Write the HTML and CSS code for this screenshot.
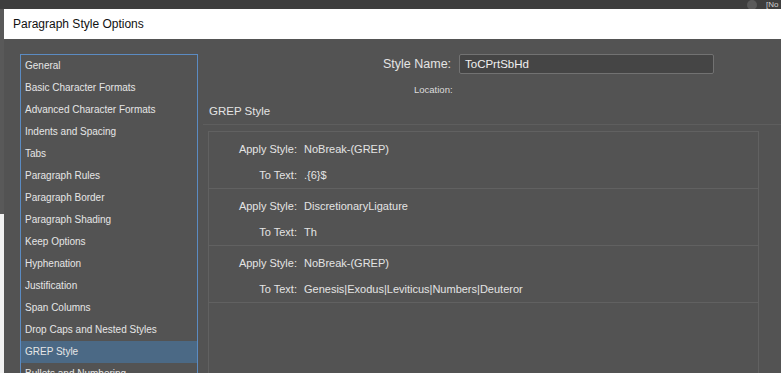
FILE: index.html
```html
<!DOCTYPE html>
<html lang="en">
<head>
    <meta charset="UTF-8">
    <title>Paragraph Style Options</title>
    <link rel="stylesheet" href="styles.css">
</head>
<body>
    <div class="topstrip">
        <span class="app-dot"></span>
        <span class="app-label">[No</span>
    </div>
    <div class="main">
        <div class="doc-edge"></div>
        <div class="dialog">
            <div class="titlebar">Paragraph Style Options</div>
            <div class="dialog-body">
                <ul class="sections">
                    <li>General</li>
                    <li>Basic Character Formats</li>
                    <li>Advanced Character Formats</li>
                    <li>Indents and Spacing</li>
                    <li>Tabs</li>
                    <li>Paragraph Rules</li>
                    <li>Paragraph Border</li>
                    <li>Paragraph Shading</li>
                    <li>Keep Options</li>
                    <li>Hyphenation</li>
                    <li>Justification</li>
                    <li>Span Columns</li>
                    <li>Drop Caps and Nested Styles</li>
                    <li class="selected">GREP Style</li>
                    <li>Bullets and Numbering</li>
                </ul>
                <div class="content">
                    <div class="name-row">
                        <label class="name-label">Style Name:</label>
                        <div class="name-input">ToCPrtSbHd</div>
                    </div>
                    <div class="location-row">
                        <span class="location-label">Location:</span>
                    </div>
                    <h2 class="section-title">GREP Style</h2>
                    <div class="grep-panel">
                        <div class="grep-row">
                            <div class="grep-line"><span class="key">Apply Style:</span><span>NoBreak-(GREP)</span></div>
                            <div class="grep-line"><span class="key">To Text:</span><span>.{6}$</span></div>
                        </div>
                        <div class="grep-row">
                            <div class="grep-line"><span class="key">Apply Style:</span><span>DiscretionaryLigature</span></div>
                            <div class="grep-line"><span class="key">To Text:</span><span>Th</span></div>
                        </div>
                        <div class="grep-row">
                            <div class="grep-line"><span class="key">Apply Style:</span><span>NoBreak-(GREP)</span></div>
                            <div class="grep-line"><span class="key">To Text:</span><span>Genesis|Exodus|Leviticus|Numbers|Deuteror</span></div>
                        </div>
                    </div>
                </div>
            </div>
        </div>
    </div>
</body>
</html>
```

FILE: styles.css
```css
html, body {
    margin: 0;
    padding: 0;
}
body {
    width: 781px;
    height: 373px;
    overflow: hidden;
    background: #535353;
    font-family: "Liberation Sans", Arial, sans-serif;
    color: #e4e4e4;
}
.topstrip {
    height: 9px;
    background: #3e3e3e;
    display: flex;
    justify-content: flex-end;
    align-items: center;
    overflow: hidden;
}
.app-dot {
    width: 10px;
    height: 10px;
    border-radius: 50%;
    background: #5a5a5a;
    margin-right: 9px;
}
.app-label {
    font-size: 8px;
    line-height: 9px;
    color: #cfcfcf;
    width: 15px;
}
.main {
    display: flex;
    height: 364px;
}
.doc-edge {
    width: 4px;
    background: linear-gradient(#595959 0, #595959 205px, #f2f2f2 205px);
}
.dialog {
    flex: 1;
    display: flex;
    flex-direction: column;
}
.titlebar {
    height: 30px;
    background: #ffffff;
    color: #111;
    font-size: 12px;
    line-height: 30px;
    padding-left: 9px;
}
.dialog-body {
    flex: 1;
    display: flex;
    padding: 15px 0 0 16px;
    background: #535353;
}
.sections {
    list-style: none;
    margin: 0;
    padding: 0;
    width: 176px;
    border: 1px solid #5b8bc2;
    border-bottom: none;
    font-size: 10px;
    color: #e6e6e6;
    flex-shrink: 0;
}
.sections li {
    height: 22px;
    line-height: 22px;
    padding-left: 4px;
}
.sections li.selected {
    background: #4b6985;
}
.content {
    flex: 1;
    padding-left: 5px;
    display: flex;
    flex-direction: column;
}
.name-row {
    display: flex;
    align-items: center;
    height: 20px;
    padding-left: 180px;
}
.name-label {
    font-size: 12.5px;
    width: 76px;
}
.name-input {
    width: 248px;
    height: 18px;
    line-height: 18px;
    background: #454545;
    border: 1px solid #727272;
    border-radius: 2px;
    padding-left: 5px;
    font-size: 11.5px;
    color: #f0f0f0;
}
.location-row {
    height: 30px;
    padding-left: 211px;
    display: flex;
    align-items: center;
}
.location-label {
    font-size: 9.5px;
    color: #dcdcdc;
}
.section-title {
    margin: 0;
    font-weight: normal;
    font-size: 11.5px;
    height: 14px;
    line-height: 14px;
    padding-left: 6px;
    padding-bottom: 6px;
    border-bottom: 1px solid #5e5e5e;
}
.grep-panel {
    margin: 6px 22px 0 5px;
    flex: 1;
    border: 1px solid #616161;
    border-bottom: none;
}
.grep-row {
    height: 57px;
    padding-top: 4px;
    box-sizing: border-box;
    border-bottom: 1px solid #616161;
    font-size: 11px;
}
.grep-line {
    display: flex;
    height: 26px;
    line-height: 26px;
}
.key {
    width: 88px;
    text-align: right;
    margin-right: 7px;
}
```
